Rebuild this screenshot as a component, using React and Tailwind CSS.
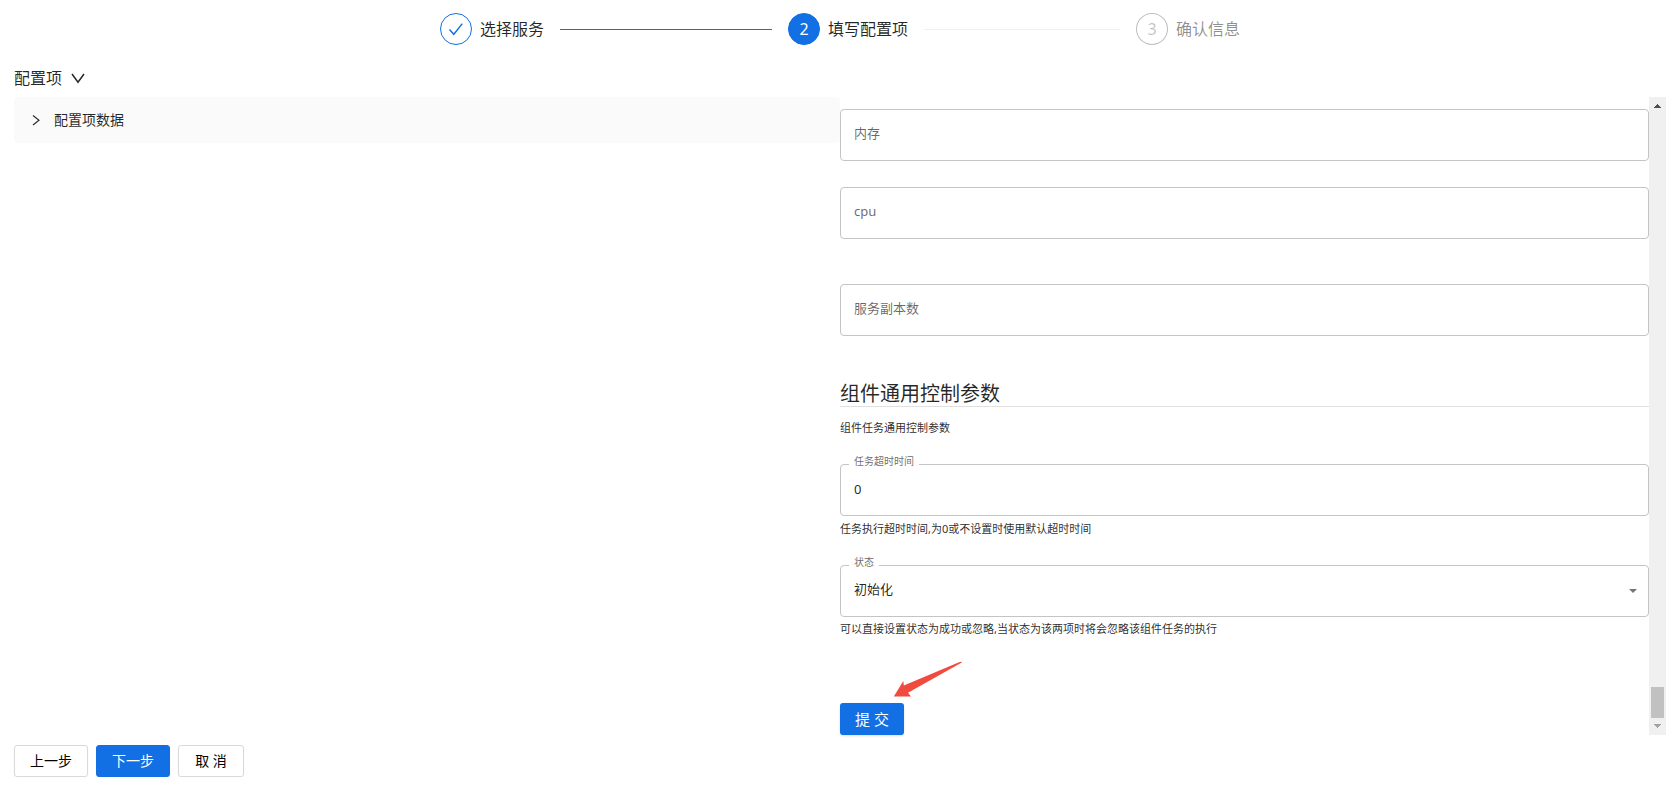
import { useState } from "react";

const steps = [
    { title: "选择服务", status: "finish" },
    { title: "填写配置项", status: "process" },
    { title: "确认信息", status: "wait" },
];

const iconStyles = {
    finish: "border-[#126fe4] bg-white text-[#126fe4]",
    process: "border-[#126fe4] bg-[#126fe4] text-white",
    wait: "border-black/25 bg-white text-black/25",
};

function CheckIcon() {
    return (
        <svg width="16" height="16" viewBox="0 0 16 16" fill="none" aria-hidden="true">
            <path d="M1.500 8.500 5.800 13.300 14.300 2.600" stroke="currentColor" strokeWidth="1.4" />
        </svg>
    );
}

function Steps() {
    return (
        <ol className="mx-auto flex max-w-[800px] gap-4">
            {steps.map((step, index) => {
                const isLast = index === steps.length - 1;

                return (
                    <li
                        key={step.title}
                        className={`flex items-center ${isLast ? "flex-none" : "flex-1"}`}
                    >
                        <span
                            className={`mr-2 flex size-8 flex-none items-center justify-center rounded-full border text-base ${iconStyles[step.status]}`}
                        >
                            {step.status === "finish" ? <CheckIcon /> : index + 1}
                        </span>
                        <span
                            className={`flex-none text-base ${step.status === "wait" ? "text-black/45" : "text-black/85"}`}
                        >
                            {step.title}
                        </span>
                        {!isLast && (
                            <span
                                className={`ml-4 h-px flex-1 ${step.status === "finish" ? "bg-[#126fe4]" : "bg-[#f0f0f0]"}`}
                            />
                        )}
                    </li>
                );
            })}
        </ol>
    );
}

function Field({ id, label, floating, className, children }) {
    return (
        <div className={`relative h-[52px] rounded border border-[#c4c4c4] ${className}`}>
            {children}
            <label
                htmlFor={id}
                className={
                    floating
                        ? "absolute -top-[9px] left-2 bg-white px-[5px] text-[10px] leading-[10px] text-black/60"
                        : "pointer-events-none absolute top-[13px] left-[13px] text-[13px] leading-5 text-black/60"
                }
            >
                {label}
            </label>
        </div>
    );
}

function TextField({ id, label, defaultValue = "", className = "" }) {
    const [value, setValue] = useState(defaultValue);

    return (
        <Field id={id} label={label} floating={value !== ""} className={className}>
            <input
                id={id}
                type="text"
                value={value}
                onChange={(e) => setValue(e.target.value)}
                className="h-full w-full bg-transparent px-[13px] pb-[2px] text-[13px] text-black/87 outline-none"
            />
        </Field>
    );
}

function ScrollTrack() {
    return (
        <div className="flex w-[17px] flex-none flex-col items-center bg-[#f0f0f0]" aria-hidden="true">
            <svg width="17" height="17" viewBox="0 0 17 17" shapeRendering="crispEdges">
                <path d="M5 11V10H6V9H7V8H8V7H9V8H10V9H11V10H12V11Z" fill="#505050" />
            </svg>
            <div className="flex-1" />
            <div className="h-[31px] w-[13px] bg-[#c1c1c1]" />
            <svg width="17" height="17" viewBox="0 0 17 17" shapeRendering="crispEdges">
                <path d="M5 6V7H6V8H7V9H8V10H9V9H10V8H11V7H12V6Z" fill="#a3a3a3" />
            </svg>
        </div>
    );
}

export default function App() {
    return (
        <main className="bg-white pt-[13px] pr-[11px] pl-[14px] font-['Noto_Sans','Noto_Sans_CJK_SC',sans-serif] text-black/85">
            <Steps />

            <button type="button" className="mt-[21px] flex items-center gap-2 text-base leading-6">
                配置项
                <svg width="16" height="16" viewBox="0 0 16 16" fill="none" aria-hidden="true">
                    <path d="M2 4 8 12.200 14 4" stroke="currentColor" strokeWidth="1.5" />
                </svg>
            </button>

            <div className="mt-[7px] grid grid-cols-2">
                <section>
                    <button
                        type="button"
                        className="flex h-[46px] w-full items-center gap-3 rounded-sm bg-[#fafafa] px-4 text-sm"
                    >
                        <svg width="12" height="12" viewBox="0 0 12 12" fill="none" aria-hidden="true">
                            <path d="M3 1.5 9 6.2 3 11" stroke="currentColor" strokeWidth="1.1" />
                        </svg>
                        配置项数据
                    </button>
                </section>

                <div className="flex">
                    <form className="flex-1 pt-3" onSubmit={(e) => e.preventDefault()}>
                        <TextField id="memory" label="内存" />
                        <TextField id="cpu" label="cpu" className="mt-[26px]" />
                        <TextField id="replicas" label="服务副本数" className="mt-[45px]" />

                        <h2 className="mt-[46px] border-b border-black/12 text-xl leading-6">
                            组件通用控制参数
                        </h2>
                        <p className="mt-[11px] text-[11px] leading-5">组件任务通用控制参数</p>

                        <TextField
                            id="timeout"
                            label="任务超时时间"
                            defaultValue="0"
                            className="mt-[26px]"
                        />
                        <p className="mt-[3px] text-[11px] leading-5">
                            任务执行超时时间,为0或不设置时使用默认超时时间
                        </p>

                        <Field id="status" label="状态" floating className="mt-[26px]">
                            <select
                                id="status"
                                className="h-full w-full appearance-none bg-transparent px-[13px] pb-[2px] text-[13px] text-black/87 outline-none"
                            >
                                <option>初始化</option>
                                <option>成功</option>
                                <option>忽略</option>
                            </select>
                            <svg
                                className="pointer-events-none absolute top-[23px] right-[11px]"
                                width="8"
                                height="4"
                                viewBox="0 0 8 4"
                                aria-hidden="true"
                            >
                                <path d="M0 0h8L4 4z" fill="#757575" />
                            </svg>
                        </Field>
                        <p className="mt-[2px] text-[11px] leading-5">
                            可以直接设置状态为成功或忽略,当状态为该两项时将会忽略该组件任务的执行
                        </p>

                        <div className="relative mt-16 w-fit">
                            <button
                                type="submit"
                                className="block h-8 min-w-16 rounded-[3px] bg-[#126fe4] text-[15px] text-white shadow-sm"
                            >
                                提 交
                            </button>
                            <svg
                                className="absolute -top-[42px] left-[53px]"
                                width="70"
                                height="36"
                                viewBox="0 0 70 36"
                                aria-hidden="true"
                            >
                                <path
                                    d="M0.800 35.500 10.300 20 10.800 24.500 66 1.200Q69.500 0.300 68.800 1.600L15 31.800 18 35.500Z"
                                    fill="#f04b3e"
                                />
                            </svg>
                        </div>
                    </form>
                    <ScrollTrack />
                </div>
            </div>

            <div className="mt-[10px] flex gap-2 text-sm">
                <button
                    type="button"
                    className="h-8 rounded-[3px] border border-[#d9d9d9] px-[15px] text-black shadow-xs"
                >
                    上一步
                </button>
                <button
                    type="button"
                    className="h-8 rounded-[3px] border border-[#126fe4] bg-[#126fe4] px-[15px] text-white shadow-xs"
                >
                    下一步
                </button>
                <button
                    type="button"
                    className="h-8 min-w-[66px] rounded-[3px] border border-[#d9d9d9] px-[15px] text-black shadow-xs"
                >
                    取 消
                </button>
            </div>
        </main>
    );
}
